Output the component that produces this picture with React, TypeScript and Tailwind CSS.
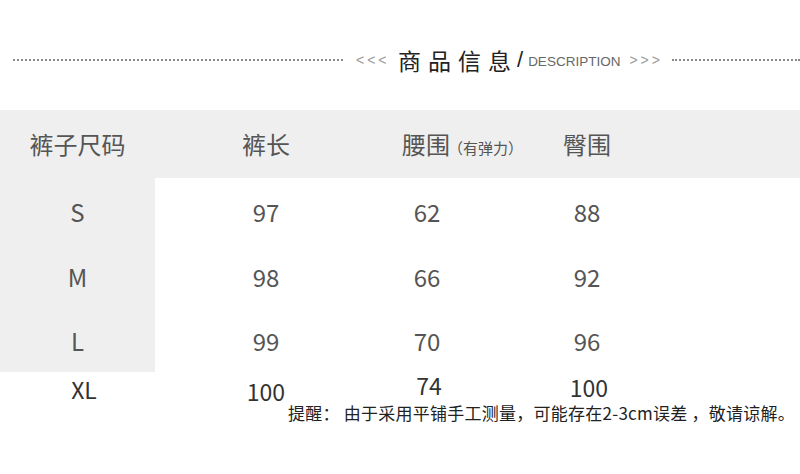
const cjk = { fontFamily: '"Noto Sans CJK SC", "Noto Sans", sans-serif' };
const latin = { fontFamily: '"Liberation Sans", sans-serif' };

const rows = [
  { size: "S", len: "97", waist: "62", hip: "88", h: "h-[67px]" },
  { size: "M", len: "98", waist: "66", hip: "92", h: "h-[64px]" },
  { size: "L", len: "99", waist: "70", hip: "96", h: "h-[63px]" },
];

export default function App() {
  return (
    <div className="w-[800px] h-[474px] bg-white overflow-hidden" style={cjk}>
      {/* title */}
      <div className="h-[110px] flex items-center pt-[10px]">
        <div className="ml-[13px] w-[330px] border-t-2 border-dotted border-[#8a8a8a]" />
        <span className="ml-[13px] w-[30px] text-[14px] tracking-[3px] text-[#9a9a9a]" style={latin}>
          &lt;&lt;&lt;
        </span>
        <span className="ml-[12px] text-[23px] leading-none tracking-[7px] text-[#222]">商品信息</span>
        <span className="ml-[-1px] text-[22px] leading-none text-[#222]" style={latin}>/</span>
        <span className="ml-[5px] text-[13.5px] text-[#666] mt-[4px]" style={latin}>DESCRIPTION</span>
        <span className="ml-[9px] w-[30px] text-[14px] tracking-[3px] text-[#9a9a9a]" style={latin}>
          &gt;&gt;&gt;
        </span>
        <div className="ml-[13px] flex-1 border-t-2 border-dotted border-[#8a8a8a]" />
      </div>

      {/* header */}
      <div className="h-[68px] bg-[#efefef] flex items-center text-[24px] text-[#555]">
        <div className="w-[155px] text-center">裤子尺码</div>
        <div className="w-[222px] text-center">裤长</div>
        <div className="w-[100px] pl-[25px] whitespace-nowrap">
          腰围
          <span className="ml-[-2px] text-[15px] text-[#555]">（有弹力）</span>
        </div>
        <div className="w-[220px] text-center">臀围</div>
      </div>

      {rows.map((r) => (
        <div key={r.size} className={`${r.h} flex text-[24px] text-[#555]`}>
          <div className="w-[155px] bg-[#efefef] flex items-center justify-center">{r.size}</div>
          <div className="w-[222px] flex items-center justify-center">{r.len}</div>
          <div className="w-[100px] flex items-center justify-center">{r.waist}</div>
          <div className="w-[220px] flex items-center justify-center">{r.hip}</div>
        </div>
      ))}

      {/* XL */}
      <div className="h-[32px] flex text-[23px] leading-none text-[#333]">
        <div className="w-[168px] text-center pt-[6px]">XL</div>
        <div className="w-[196px] text-center pt-[8px]">100</div>
        <div className="w-[130px] text-center pt-[2px]">74</div>
        <div className="w-[190px] text-center pt-[4px]">100</div>
      </div>
      <div className="pl-[288px] text-[17px] leading-none tracking-[0.25px] text-[#222] whitespace-nowrap">
        提醒： 由于采用平铺手工测量，可能存在2-3cm误差 ，敬请谅解。
      </div>
    </div>
  );
}
